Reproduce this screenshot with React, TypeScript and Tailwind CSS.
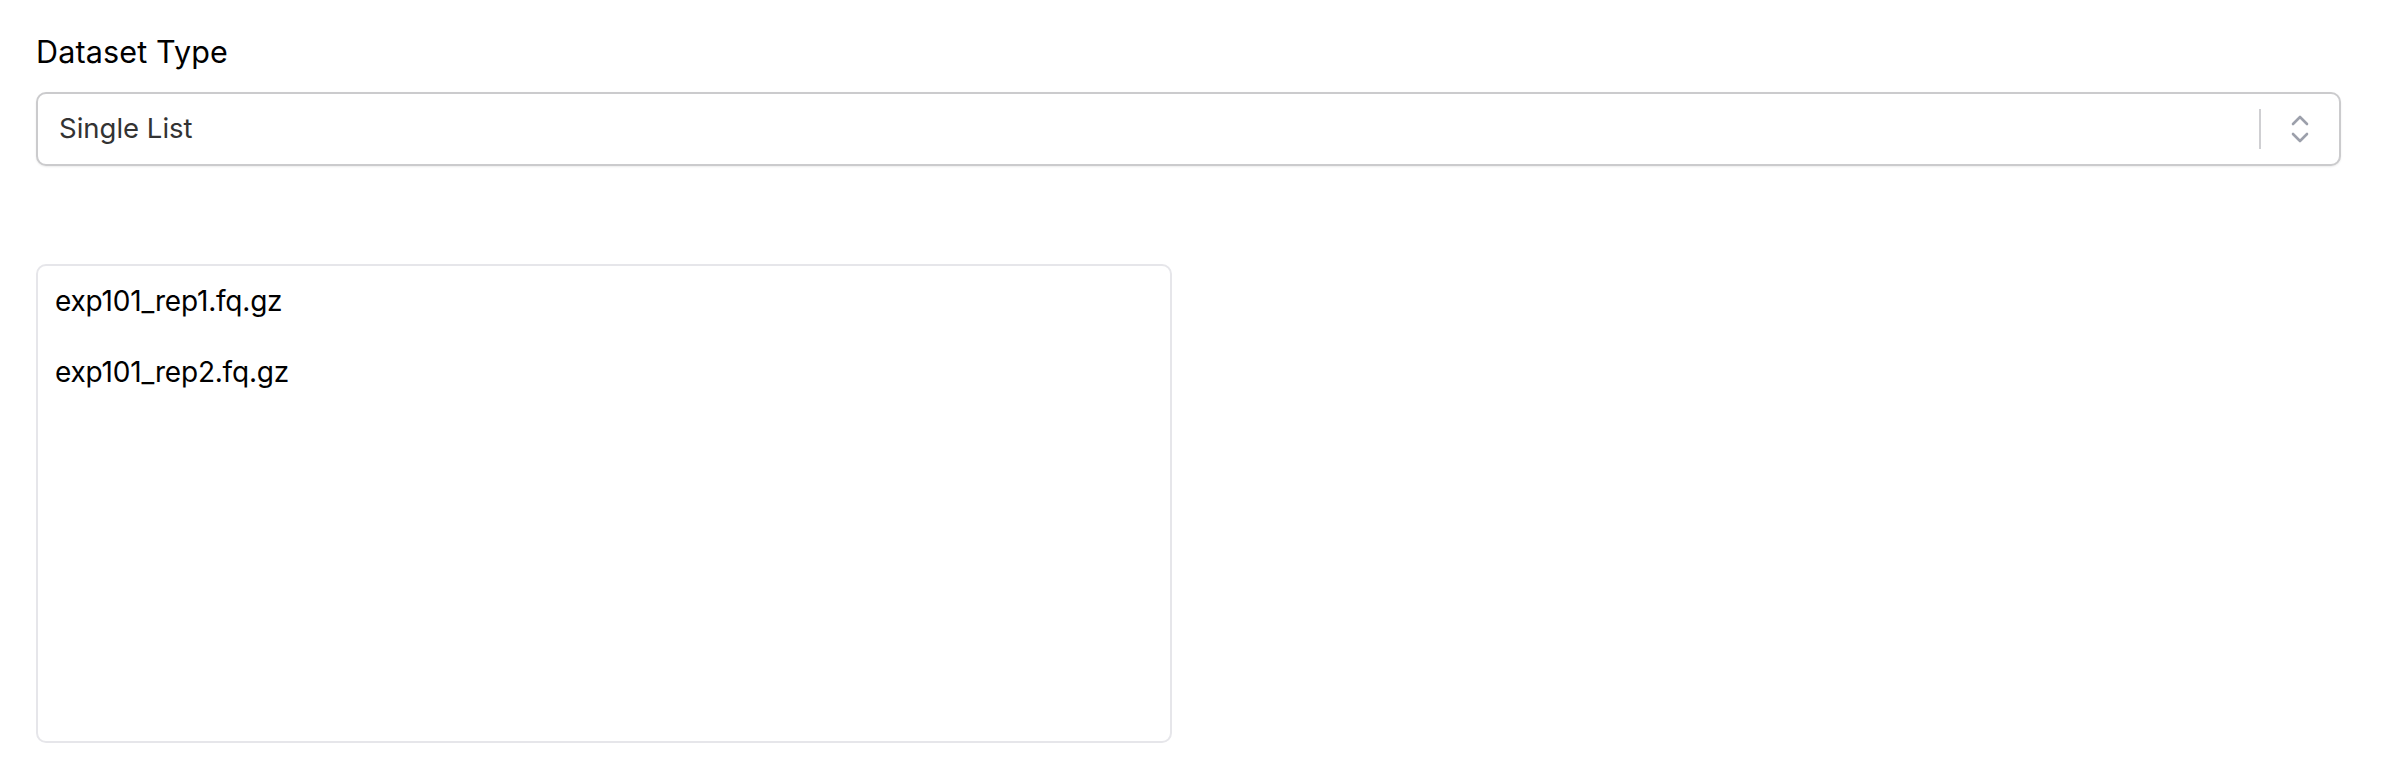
const files = ['exp101_rep1.fq.gz', 'exp101_rep2.fq.gz'];

export default function App() {
  return (
    <div className="min-h-[768px] bg-white pl-9 pt-[34px] font-['Inter',sans-serif] text-black">
      <div className="w-[2305px]">
        <label className="block text-[30.5px] leading-[36px] tracking-[0.15px]">Dataset Type</label>

        <div className="mt-[22px] flex h-[74px] items-center rounded-[10px] border-2 border-[#cbcbcd] bg-white pl-[21px] shadow-[0_1px_2px_rgba(0,0,0,0.08)]">
          <span className="flex-1 text-[27.5px] text-[#333333]">Single List</span>
          <div className="h-[40px] w-[2px] bg-[#cfcfd2]" />
          <div className="flex w-[78px] items-center justify-center">
            <svg width="20" height="32" viewBox="0 0 20 32" fill="none" stroke="#9ca0ab" strokeWidth="2.6" strokeLinecap="round" strokeLinejoin="round">
              <path d="M3 11 L10 4 L17 11" />
              <path d="M3 21 L10 28 L17 21" />
            </svg>
          </div>
        </div>

        <div className="mt-[98px] grid grid-cols-2 gap-[34px]">
          <div className="h-[479px] rounded-[10px] border-2 border-[#e6e6ea] bg-white px-[17px]">
            {files.map((f) => (
              <div key={f} className="text-[28px] leading-[71px] tracking-[-0.2px]">
                {f}
              </div>
            ))}
          </div>
          <div />
        </div>
      </div>
    </div>
  );
}
